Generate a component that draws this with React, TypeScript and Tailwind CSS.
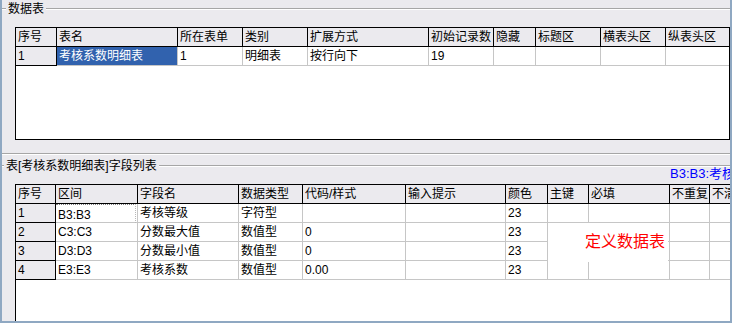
import React from "react";

const TOP_HEADERS = ["序号", "表名", "所在表单", "类别", "扩展方式", "初始记录数", "隐藏", "标题区", "横表头区", "纵表头区"];
const TOP_ROW = ["1", "考核系数明细表", "1", "明细表", "按行向下", "19", "", "", "", ""];

const FIELD_HEADERS = ["序号", "区间", "字段名", "数据类型", "代码/样式", "输入提示", "颜色", "主键", "必填", "不重复", "不清空"];
const FIELD_ROWS = [
  ["1", "B3:B3", "考核等级", "字符型", "", "", "23", "", "", "", ""],
  ["2", "C3:C3", "分数最大值", "数值型", "0", "", "23", "", "", "", ""],
  ["3", "D3:D3", "分数最小值", "数值型", "0", "", "23", "", "", "", ""],
  ["4", "E3:E3", "考核系数", "数值型", "0.00", "", "23", "", "", "", ""],
];

function GroupTitle({ text, lead }: { text: string; lead: string }) {
  return (
    <div className="flex items-center h-[22px]">
      <div className={`${lead} h-[2px] border-t border-[#a6a6a6] border-b border-b-white`} />
      <span className="px-[2px] leading-[14px] whitespace-nowrap">{text}</span>
      <div className="flex-1 h-[2px] border-t border-[#a6a6a6] border-b border-b-white" />
    </div>
  );
}

export default function App() {
  return (
    <div className="relative w-[732px] h-[323px] overflow-hidden flex flex-col bg-[#ebeaee] border-l-2 border-r-2 border-b-2 border-[#8fa8c2] text-[12px] text-black font-['Liberation_Sans','Noto_Sans_CJK_SC',sans-serif]">
      {/* 数据表 */}
      <div className="flex items-center h-[18px]">
        <div className="w-[4px] h-[2px] border-t border-[#a6a6a6] border-b border-b-white" />
        <span className="px-[2px] leading-[14px]">数据表</span>
        <div className="flex-1 h-[2px] border-t border-[#a6a6a6] border-b border-b-white" />
      </div>

      <div className="ml-[13px] mt-[9px] h-[113px] bg-white border border-black overflow-hidden">
        <div className="grid grid-cols-[41px_121px_65px_65px_121px_65px_42px_65px_65px_1fr]">
          {TOP_HEADERS.map((h, i) => (
            <div
              key={h}
              className={`h-[19px] bg-[#ebeaee] border-b border-black ${i < TOP_HEADERS.length - 1 ? "border-r" : ""} pl-[2px] leading-[18px] whitespace-nowrap overflow-hidden`}
            >
              {h}
            </div>
          ))}
          {TOP_ROW.map((v, i) => (
            <div
              key={i}
              className={`h-[19px] border-b pl-[2px] leading-[18px] whitespace-nowrap overflow-hidden ${
                i < TOP_ROW.length - 1 ? "border-r" : ""
              } ${
                i === 0
                  ? "bg-[#ebeaee] border-black"
                  : i === 1
                  ? "bg-[#3162ae] text-white border-[#c6c6c6]"
                  : "bg-white border-[#c6c6c6]"
              }`}
            >
              {v}
            </div>
          ))}
        </div>
      </div>

      <div className="h-[13px] shrink-0" />
      <div className="h-[2px] border-t border-[#a6a6a6] border-b border-b-white" />

      {/* 字段列表 */}
      <GroupTitle text="表[考核系数明细表]字段列表" lead="w-[2px]" />
      <span className="absolute left-[668px] top-[166px] text-[13px] leading-[16px] text-[#0000ff] whitespace-nowrap">
        B3:B3:考核等级
      </span>

      <div className="relative flex-1 min-h-0 ml-[13px] mt-[7px] bg-white border-l border-t border-black overflow-hidden">
        <div className="grid w-max grid-cols-[40px_82px_101px_64px_103px_100px_42px_41px_81px_40px_60px]">
          {FIELD_HEADERS.map((h) => (
            <div
              key={h}
              className="h-[19px] bg-[#ebeaee] border-r border-b border-black pl-[2px] leading-[18px] whitespace-nowrap overflow-hidden"
            >
              {h}
            </div>
          ))}
          {FIELD_ROWS.map((row, r) =>
            row.map((v, i) => {
              if (i === 0) {
                return (
                  <div
                    key={`${r}-${i}`}
                    className="h-[19px] bg-[#ebeaee] border-r border-b border-black pl-[2px] leading-[18px]"
                  >
                    {v}
                  </div>
                );
              }
              if (r === 0 && i === 1) {
                return (
                  <div key={`${r}-${i}`} className="h-[19px] border-r border-b border-[#c6c6c6] bg-white">
                    <div className="h-[19px] w-[80px] border-t border-dotted border-[#808080] border-r border-r-[#b8b8b8] pl-[2px] pt-[2px] leading-[16px]">
                      {v}
                    </div>
                  </div>
                );
              }
              return (
                <div
                  key={`${r}-${i}`}
                  className="h-[19px] border-r border-b border-[#c6c6c6] bg-white pl-[2px] leading-[18px] whitespace-nowrap overflow-hidden"
                >
                  {v}
                </div>
              );
            })
          )}
        </div>

        {/* overlay label */}
        <div className="absolute left-[532px] top-[38px] w-[120px] h-[39px] bg-white pl-[37px] pt-[7px] text-[16px] leading-[20px] text-[#ff0000] font-['Noto_Sans_CJK_SC',sans-serif]">
          定义数据表
        </div>
      </div>
    </div>
  );
}
